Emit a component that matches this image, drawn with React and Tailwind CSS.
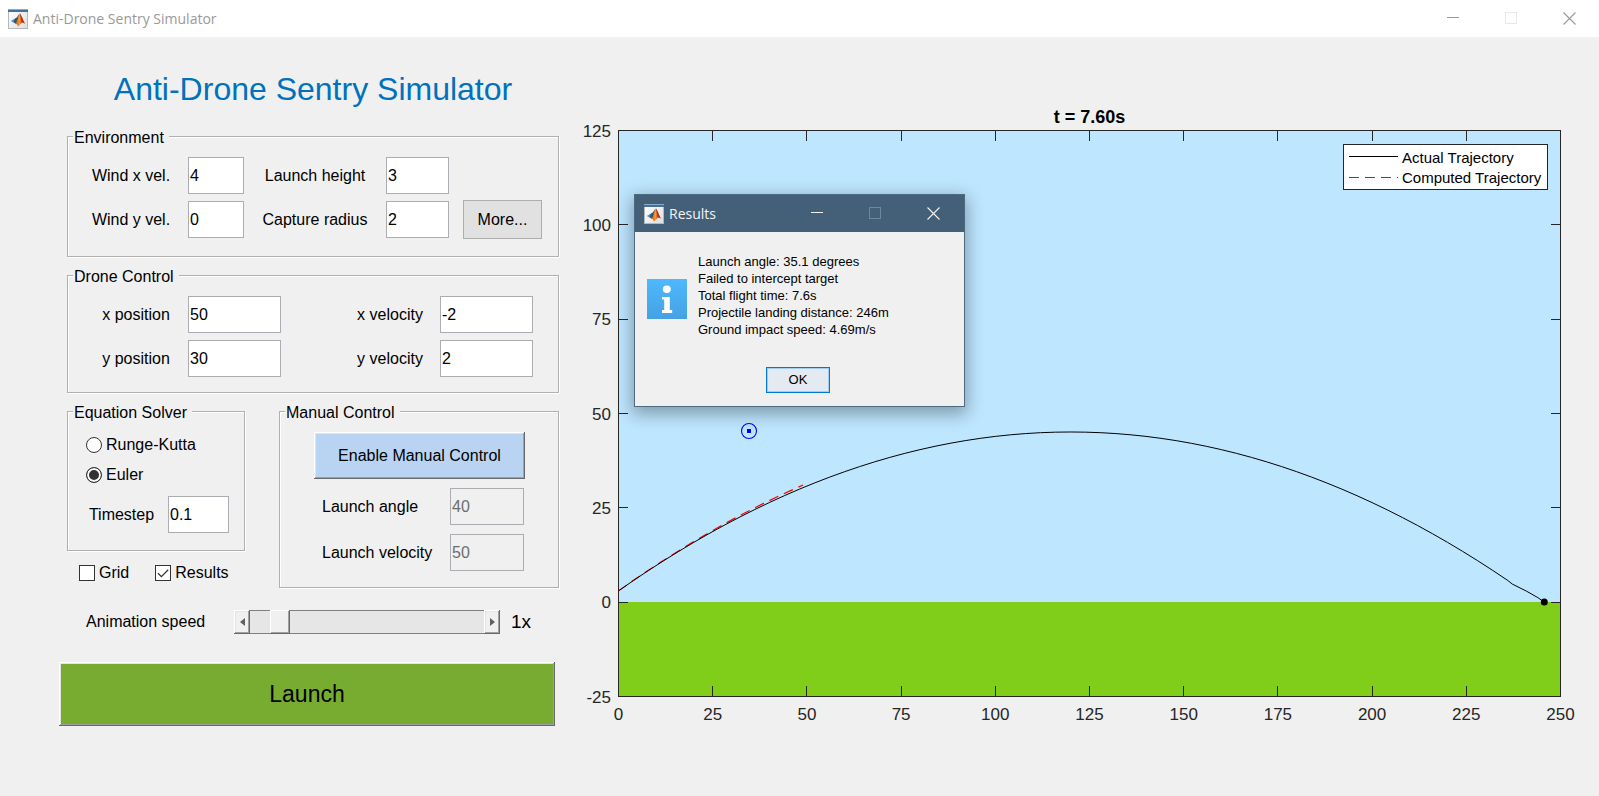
import React from "react";

const FIELD =
  "h-[37px] w-full min-w-0 border border-[#abadb3] bg-white px-px text-base text-black outline-none disabled:bg-[#f0f0f0] disabled:text-[#6d6d6d]";

const RAISED =
  "shadow-[inset_-1px_-1px_#696969,inset_1px_1px_#ffffff,inset_-2px_-2px_#a0a0a0,inset_2px_2px_#e3e3e3]";

function Panel({ title, className, children }) {
  return (
    <fieldset
      className={
        "min-w-0 border border-[#b0b0b0] shadow-[1px_1px_0_#ffffff,inset_1px_1px_0_#ffffff] " +
        className
      }
    >
      <legend className="ml-[5px] bg-[#f0f0f0] pt-1 pl-px pr-[5px] text-base leading-4">
        {title}
      </legend>
      {children}
    </fieldset>
  );
}

function Field({ id, label, value, disabled, labelClass = "text-center" }) {
  return (
    <>
      <label htmlFor={id} className={"text-base leading-4 " + labelClass}>
        {label}
      </label>
      <input id={id} type="text" defaultValue={value} disabled={disabled} className={FIELD} />
    </>
  );
}

function Radio({ label, checked }) {
  return (
    <label className="flex h-4 items-center gap-1 text-base leading-4">
      <input
        type="radio"
        name="solver"
        defaultChecked={checked}
        className="size-4 appearance-none rounded-full border border-[#333333] bg-white shadow-[inset_0_0_0_2px_#ffffff] checked:bg-[#333333]"
      />
      {label}
    </label>
  );
}

function Check({ label, checked }) {
  return (
    <label className="flex h-4 items-center gap-1 text-base leading-4">
      <span className="grid size-4">
        <input
          type="checkbox"
          defaultChecked={checked}
          className="peer col-start-1 row-start-1 size-4 appearance-none border border-[#333333] bg-white"
        />
        <svg
          viewBox="0 0 16 16"
          className="pointer-events-none invisible col-start-1 row-start-1 size-4 peer-checked:visible"
          aria-hidden="true"
        >
          <path d="M3 8.2 6.4 11.6 13.2 4.8" fill="none" stroke="#333333" strokeWidth="1.3" />
        </svg>
      </span>
      {label}
    </label>
  );
}

function AppIcon() {
  return (
    <svg viewBox="0 0 20 20" className="size-5 shrink-0" aria-hidden="true">
      <defs>
        <linearGradient id="iconBg" x1="0" y1="0" x2="1" y2="1">
          <stop offset="0" stopColor="#ffffff" />
          <stop offset="1" stopColor="#dcdfe3" />
        </linearGradient>
        <linearGradient id="iconPeak" x1="0" y1="0" x2="1" y2="0">
          <stop offset="0" stopColor="#c2451a" />
          <stop offset="0.4" stopColor="#f6a02c" />
          <stop offset="0.6" stopColor="#e2571c" />
          <stop offset="1" stopColor="#a82712" />
        </linearGradient>
      </defs>
      <rect x="0.5" y="0.5" width="19" height="19" fill="url(#iconBg)" stroke="#b4b8be" />
      <rect x="0" y="0" width="20" height="1" fill="#8fa9c6" />
      <rect x="0" y="1" width="20" height="2" fill="#44709f" />
      <path d="M2.8 12 7 9.6 9 8.6 11.4 5 10.6 11 7.6 14.8Z" fill="#4a8fd0" />
      <path d="M7 9.7 9 8.4 11.4 4.8 10 11.6 7.8 14.6 5.6 13Z" fill="#27567c" />
      <path
        d="M7.4 14.4 C9.4 12.6 10.2 6.4 11.8 4.6 C13.4 5.4 14.6 11.2 17.2 15 C15.6 13.6 14.4 13 13.2 14.2 C12 15.6 11 17 9.9 17.4 C9.5 15.8 8.8 14.6 7.4 14.4 Z"
        fill="url(#iconPeak)"
      />
      <path d="M11.8 4.6 C13.4 5.4 14.6 11.2 17.2 15 C15.8 13.8 14.9 13.3 13.9 13.7 C13.2 11 12.6 7 11.8 4.6 Z" fill="#b5341a" />
    </svg>
  );
}

function WindowButtons({ line, faint }) {
  const button = "grid h-[37px] w-[58px] place-items-center";
  return (
    <div className="ml-auto flex">
      <button type="button" aria-label="Minimize" className={button}>
        <svg viewBox="0 0 13 13" className="size-[13px]">
          <path d="M0 5.5H12" stroke={line} />
        </svg>
      </button>
      <button type="button" aria-label="Maximize" disabled className={button}>
        <svg viewBox="0 0 13 13" className="size-[13px]">
          <rect x="0.5" y="0.5" width="11" height="11" fill="none" stroke={faint} />
        </svg>
      </button>
      <button type="button" aria-label="Close" className={button}>
        <svg viewBox="0 0 13 13" className="size-[13px]">
          <path d="M0.5 0.5 12.5 12.5M12.5 0.5 0.5 12.5" stroke={line} strokeWidth="1.1" />
        </svg>
      </button>
    </div>
  );
}

const PLOT = { left: 43.5, right: 985.5, top: 30.5, bottom: 596.5 };
const px = (x) => PLOT.left + (x / 250) * (PLOT.right - PLOT.left);
const py = (y) => PLOT.bottom - ((y + 25) / 150) * (PLOT.bottom - PLOT.top);
const snap = (v) => Math.floor(v) + 0.5;
const height = (x) => 45.1 - 0.002924 * (x - 120) ** 2;

const actual = [];
for (let x = 0; x <= 236; x += 4) actual.push([x, height(x)]);
actual.push([237.2, 4.8], [241, 2.9], [244, 1.2], [245.7, 0]);

const computed = [];
for (let x = 0; x <= 49; x += 3.5) computed.push([x, height(x) + 0.009 * x + 0.0001 * x * x]);

const toPoints = (list) => list.map(([x, y]) => px(x) + "," + py(y)).join(" ");
const xTicks = [0, 25, 50, 75, 100, 125, 150, 175, 200, 225, 250];
const yTicks = [-25, 0, 25, 50, 75, 100, 125];

function Chart() {
  return (
    <svg
      viewBox="0 0 1024 640"
      className="h-auto w-full font-['Liberation_Sans',Arial,sans-serif]"
      role="img"
      aria-label="Projectile trajectory"
    >
      <rect x="43" y="30" width="943" height="567" fill="#bee6ff" />
      <rect x="43" y="502" width="943" height="95" fill="#80cd1a" />
      <text x="514.5" y="23" textAnchor="middle" fontSize="18" fontWeight="bold">
        t = 7.60s
      </text>
      <g stroke="#262626" fill="none">
        <rect x="43.5" y="30.5" width="942" height="566" />
        {xTicks.slice(1, -1).map((t) => (
          <path key={t} d={`M${snap(px(t))} 31v10M${snap(px(t))} 596v-10`} />
        ))}
        {yTicks.slice(1, -1).map((t) => (
          <path key={t} d={`M44 ${snap(py(t))}h9M985 ${snap(py(t))}h-9`} />
        ))}
      </g>
      <g fontSize="17" fill="#262626">
        {xTicks.map((t) => (
          <text key={t} x={px(t)} y="620" textAnchor="middle">
            {t}
          </text>
        ))}
        {yTicks.map((t) => (
          <text key={t} x="36" y={py(t) + 6} textAnchor="end">
            {t}
          </text>
        ))}
      </g>
      <polyline
        points={toPoints(computed)}
        fill="none"
        stroke="#ff0000"
        strokeWidth="1.2"
        strokeDasharray="10 6"
      />
      <polyline points={toPoints(actual)} fill="none" stroke="#000000" />
      <circle cx={px(245.7)} cy="502" r="3.5" fill="#000000" />
      <circle cx="174" cy="331" r="7.5" fill="none" stroke="#0000ff" strokeWidth="1.1" />
      <rect x="172" y="329" width="4" height="4" fill="#0000ff" />
      <rect x="768.5" y="44.5" width="204" height="45" fill="#ffffff" stroke="#262626" />
      <path d="M774 56.5H823" stroke="#000000" />
      <path d="M774 77.5H823" stroke="#ff0000" strokeDasharray="10 6" />
      <g fontSize="15">
        <text x="827" y="63">
          Actual Trajectory
        </text>
        <text x="827" y="83">
          Computed Trajectory
        </text>
      </g>
    </svg>
  );
}

function ResultsDialog() {
  return (
    <div
      role="dialog"
      aria-label="Results"
      className="absolute top-[94px] left-[59px] flex w-[331px] flex-col border border-[#4c6a82] bg-[#f0f0f0] shadow-[0_5px_16px_2px_rgba(0,0,0,0.33)]"
    >
      <div className="flex h-[37px] items-center bg-[#446078] pr-[2px] pl-[9px] font-['Open_Sans',sans-serif] text-[14px] text-[#f2f4f6]">
        <AppIcon />
        <span className="ml-[5px]">Results</span>
        <WindowButtons line="#f2f4f6" faint="#6f879b" />
      </div>
      <div className="flex items-center gap-[11px] pt-[21px] pl-3">
        <svg viewBox="0 0 40 40" className="mt-[6px] size-10" aria-hidden="true">
          <defs>
            <linearGradient id="infoBg" x1="0" y1="0" x2="0" y2="1">
              <stop offset="0" stopColor="#4fb8ff" />
              <stop offset="1" stopColor="#44a2e2" />
            </linearGradient>
          </defs>
          <rect width="40" height="40" fill="url(#infoBg)" />
          <ellipse cx="19.8" cy="10.3" rx="4" ry="3.8" fill="#ffffff" />
          <path d="M15 18H22.8V31H25.2V34H15V31H17.2V20.5H15Z" fill="#ffffff" />
        </svg>
        <div className="text-[13px] leading-[17px]">
          <p>Launch angle: 35.1 degrees</p>
          <p>Failed to intercept target</p>
          <p>Total flight time: 7.6s</p>
          <p>Projectile landing distance: 246m</p>
          <p>Ground impact speed: 4.69m/s</p>
        </div>
      </div>
      <div className="flex justify-center pt-[29px] pr-[3px] pb-[13px]">
        <button
          type="button"
          className="h-[26px] w-16 border border-[#0078d7] bg-[#e3eaf2] text-[13px] shadow-[inset_0_0_0_1px_#a5cdf0]"
        >
          OK
        </button>
      </div>
    </div>
  );
}

function SpeedSlider() {
  const end = "grid h-6 w-4 shrink-0 place-items-center bg-[#f0f0f0] " + RAISED;
  return (
    <div className="flex h-6 w-[266px]">
      <button type="button" aria-label="Slower" className={end}>
        <svg viewBox="0 0 5 8" className="h-2 w-[5px]">
          <path d="M5 0V8L0 4Z" fill="#606060" />
        </svg>
      </button>
      <input
        id="speed"
        type="range"
        min="0"
        max="1000"
        defaultValue="93"
        className="m-0 h-6 min-w-0 flex-1 appearance-none bg-[#e6e6e6] shadow-[inset_0_1px_#808080,inset_0_-1px_#808080] [&::-webkit-slider-thumb]:h-6 [&::-webkit-slider-thumb]:w-5 [&::-webkit-slider-thumb]:appearance-none [&::-webkit-slider-thumb]:bg-[#f0f0f0] [&::-webkit-slider-thumb]:shadow-[inset_-1px_-1px_#696969,inset_1px_1px_#ffffff,inset_-2px_-2px_#a0a0a0]"
      />
      <button type="button" aria-label="Faster" className={end}>
        <svg viewBox="0 0 5 8" className="h-2 w-[5px]">
          <path d="M0 0V8L5 4Z" fill="#606060" />
        </svg>
      </button>
    </div>
  );
}

export default function App() {
  return (
    <div className="flex min-h-screen flex-col bg-[#f0f0f0] font-['Liberation_Sans',Arial,sans-serif] text-black">
      <header className="flex h-[37px] items-center bg-white pr-px pl-2 font-['Open_Sans',sans-serif] text-[14px] text-[#999999]">
        <AppIcon />
        <span className="ml-[5px]">Anti-Drone Sentry Simulator</span>
        <WindowButtons line="#999999" faint="#e8e8e8" />
      </header>

      <main className="flex flex-1 items-start gap-4 pl-[59px]">
        <section className="flex w-[500px] shrink-0 flex-col pt-8">
          <div className="flex flex-col pl-2">
            <h1 className="text-center text-[32px] leading-10 text-[#0072bd]">
              Anti-Drone Sentry Simulator
            </h1>

            <Panel title="Environment" className="mt-[17px] pt-[11px] pb-[18px]">
              <div className="grid grid-cols-[114px_56px_142px_63px_93px] items-center gap-y-[7px] pl-[6px]">
                <Field id="wind-x" label="Wind x vel." value="4" />
                <Field id="launch-height" label="Launch height" value="3" labelClass="text-center" />
                <span />
                <Field id="wind-y" label="Wind y vel." value="0" />
                <Field id="capture-radius" label="Capture radius" value="2" labelClass="text-center" />
                <button
                  type="button"
                  className="-my-px h-[39px] w-[79px] justify-self-end border border-[#adadad] bg-[#e1e1e1] text-base"
                >
                  More...
                </button>
              </div>
            </Panel>

            <Panel title="Drone Control" className="mt-2 pt-[11px] pb-[15px]">
              <div className="flex gap-[59px] pl-4">
                <div className="grid grid-cols-[104px_93px] items-center gap-y-[7px]">
                  <Field id="x-position" label="x position" value="50" />
                  <Field id="y-position" label="y position" value="30" />
                </div>
                <div className="grid grid-cols-[100px_93px] items-center gap-y-[7px]">
                  <Field id="x-velocity" label="x velocity" value="-2" />
                  <Field id="y-velocity" label="y velocity" value="2" />
                </div>
              </div>
            </Panel>

            <div className="mt-2 flex items-start justify-between">
              <div className="flex w-[178px] flex-col">
                <Panel title="Equation Solver" className="pt-4 pb-[17px]">
                  <div className="flex flex-col gap-[14px] pl-[18px]">
                    <Radio label="Runge-Kutta" />
                    <Radio label="Euler" checked />
                  </div>
                  <div className="mt-[13px] grid grid-cols-[93px_61px] items-center pl-[7px]">
                    <Field id="timestep" label="Timestep" value="0.1" />
                  </div>
                </Panel>
                <div className="mt-[14px] flex gap-[26px] pl-3">
                  <Check label="Grid" />
                  <Check label="Results" checked />
                </div>
              </div>

              <Panel title="Manual Control" className="w-[280px] pt-[11px] pb-4">
                <button
                  type="button"
                  className={"ml-[34px] h-[47px] w-[211px] bg-[#b9d4f3] text-base " + RAISED}
                >
                  Enable Manual Control
                </button>
                <div className="mt-[9px] grid grid-cols-[128px_74px] items-center gap-y-[9px] pl-[42px]">
                  <Field
                    id="launch-angle"
                    label="Launch angle"
                    value="40"
                    disabled
                    labelClass="text-left"
                  />
                  <Field
                    id="launch-velocity"
                    label="Launch velocity"
                    value="50"
                    disabled
                    labelClass="text-left"
                  />
                </div>
              </Panel>
            </div>

            <div className="mt-[22px] flex h-6 items-center pl-[19px]">
              <label htmlFor="speed" className="w-[148px] text-base leading-4">
                Animation speed
              </label>
              <SpeedSlider />
              <output htmlFor="speed" className="ml-[11px] text-[19px] leading-5">
                1x
              </output>
            </div>
          </div>

          <button
            type="button"
            className={"mt-7 mr-1 h-16 bg-[#77ac30] text-[23px] " + RAISED}
          >
            Launch
          </button>
        </section>

        <section className="relative mt-[63px] min-w-0 flex-1">
          <Chart />
          <ResultsDialog />
        </section>
      </main>
    </div>
  );
}
